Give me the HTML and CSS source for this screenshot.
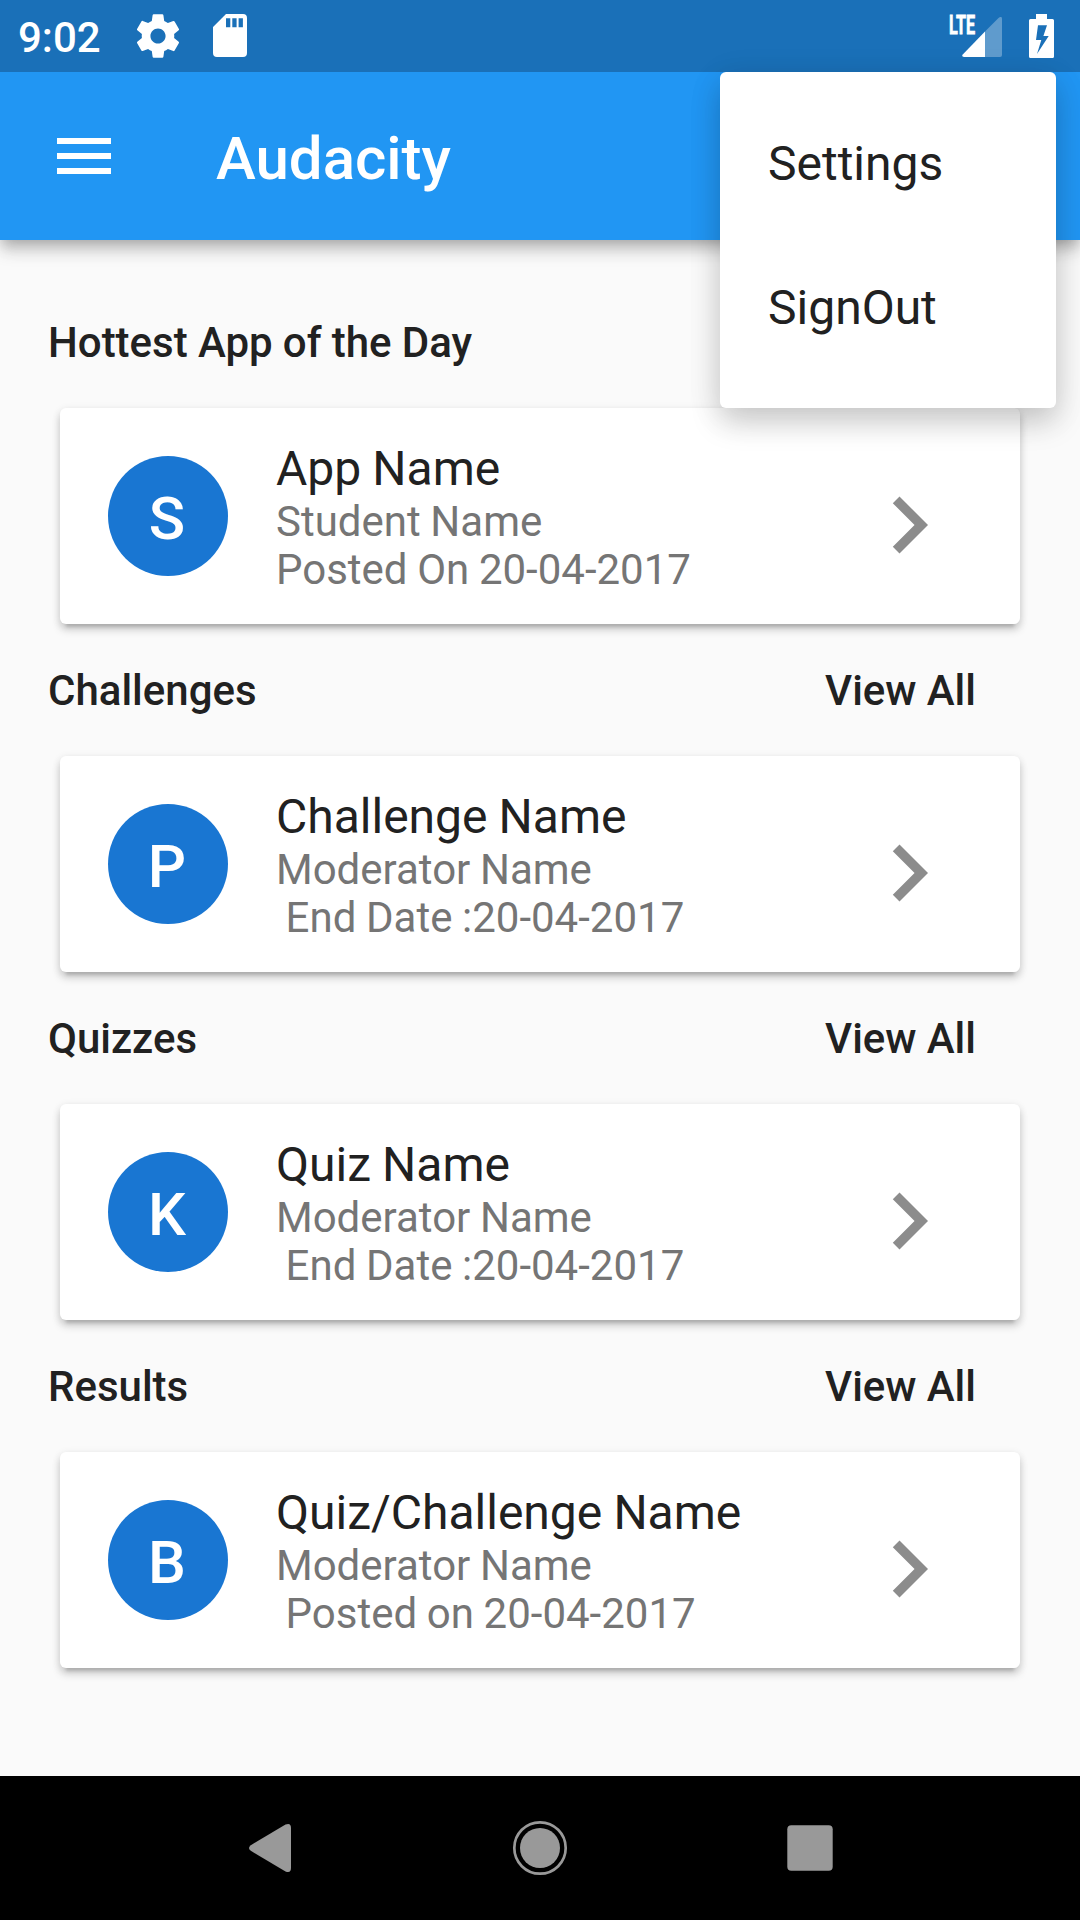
FILE: index.html
```html
<!DOCTYPE html>
<html lang="en">
<head>
<meta charset="utf-8">
<title>Audacity</title>
<link rel="stylesheet" href="styles.css">
</head>
<body>
<div class="screen">
  <header class="status-bar">
    <span class="clock">9:02</span>
    <svg class="gear" viewBox="0 0 24 24"><path d="M19.43 12.98c.04-.32.07-.64.07-.98s-.03-.66-.07-.98l2.11-1.65c.19-.15.24-.42.12-.64l-2-3.46c-.12-.22-.39-.3-.61-.22l-2.49 1c-.52-.4-1.08-.73-1.69-.98l-.38-2.65C14.46 2.18 14.25 2 14 2h-4c-.25 0-.46.18-.49.42l-.38 2.65c-.61.25-1.17.59-1.69.98l-2.49-1c-.23-.09-.49 0-.61.22l-2 3.46c-.13.22-.07.49.12.64l2.11 1.65c-.04.32-.07.65-.07.98s.03.66.07.98l-2.11 1.65c-.19.15-.24.42-.12.64l2 3.46c.12.22.39.3.61.22l2.49-1c.52.4 1.08.73 1.69.98l.38 2.65c.03.24.24.42.49.42h4c.25 0 .46-.18.49-.42l.38-2.65c.61-.25 1.17-.59 1.69-.98l2.49 1c.23.09.49 0 .61-.22l2-3.46c.12-.22.07-.49-.12-.64l-2.11-1.65zM12 15.5c-1.93 0-3.5-1.57-3.5-3.5s1.57-3.5 3.5-3.5 3.5 1.57 3.5 3.5-1.57 3.5-3.5 3.5z"/></svg>
    <svg class="sd" viewBox="0 0 34 43"><path fill-rule="evenodd" d="M13 0h17a4 4 0 0 1 4 4v35a4 4 0 0 1-4 4H4a4 4 0 0 1-4-4V13zM13 4.300v9h4.300v-9zM19.300 4.300v9h4.300v-9zM25.600 4.300v9h4.300v-9z"/></svg>
    <span class="lte">LTE</span>
    <svg class="signal" viewBox="0 0 40 40"><path opacity=".3" d="M23 14.500 36.500 1Q40-1.500 40 2v36q0 2-2 2H23z"/><path d="M1 37.300 23 14.500V40H2Q0 40 .2 38.300z"/></svg>
    <svg class="battery" viewBox="0 0 25 44"><path fill-rule="evenodd" d="M7 0h11v5h5.500Q25 5 25 6.500v36q0 1.500-1.500 1.500h-22Q0 44 0 42.500v-36Q0 5 1.500 5H7zM9 11.300 7 26h5.300L8 40 19.700 22h-5.300l3.600-10.700z"/></svg>
  </header>
  <div class="app-bar">
    <svg class="menu-icon" viewBox="0 0 24 24"><path d="M3 18h18v-2H3v2zm0-5h18v-2H3v2zm0-7v2h18V6H3z"/></svg>
    <h1 class="app-title">Audacity</h1>
  </div>
  <main class="content">
    <section>
      <div class="section-head"><h2>Hottest App of the Day</h2></div>
      <article class="card">
        <div class="avatar">S</div>
        <div class="info"><h3>App Name</h3><p>Student Name</p><p>Posted On 20-04-2017</p></div>
        <svg class="chevron" viewBox="0 0 24 24"><path d="M10 6 8.590 7.410 13.170 12l-4.580 4.590L10 18l6-6z"/></svg>
      </article>
    </section>
    <section>
      <div class="section-head"><h2>Challenges</h2><span>View All</span></div>
      <article class="card">
        <div class="avatar">P</div>
        <div class="info"><h3>Challenge Name</h3><p>Moderator Name</p><p> End Date :20-04-2017</p></div>
        <svg class="chevron" viewBox="0 0 24 24"><path d="M10 6 8.590 7.410 13.170 12l-4.580 4.590L10 18l6-6z"/></svg>
      </article>
    </section>
    <section>
      <div class="section-head"><h2>Quizzes</h2><span>View All</span></div>
      <article class="card">
        <div class="avatar">K</div>
        <div class="info"><h3>Quiz Name</h3><p>Moderator Name</p><p> End Date :20-04-2017</p></div>
        <svg class="chevron" viewBox="0 0 24 24"><path d="M10 6 8.590 7.410 13.170 12l-4.580 4.590L10 18l6-6z"/></svg>
      </article>
    </section>
    <section>
      <div class="section-head"><h2>Results</h2><span>View All</span></div>
      <article class="card">
        <div class="avatar">B</div>
        <div class="info"><h3>Quiz/Challenge Name</h3><p>Moderator Name</p><p> Posted on 20-04-2017</p></div>
        <svg class="chevron" viewBox="0 0 24 24"><path d="M10 6 8.590 7.410 13.170 12l-4.580 4.590L10 18l6-6z"/></svg>
      </article>
    </section>
  </main>
  <nav class="nav-bar">
    <svg viewBox="0 0 60 60"><path d="M10.800 27.200 45.500 6.600Q51 4.500 51 10v40q0 5.500-5.500 3.400L10.800 32.800Q7.200 30 10.800 27.200z"/></svg>
    <svg viewBox="0 0 60 60"><circle cx="30" cy="30" r="25.700" fill="none" stroke="#999" stroke-width="2.700"/><circle cx="30" cy="30" r="20"/></svg>
    <svg viewBox="0 0 60 60"><rect x="7.300" y="7.300" width="45.400" height="45.400" rx="4"/></svg>
  </nav>
  <div class="popup">
    <div class="popup-item">Settings</div>
    <div class="popup-item">SignOut</div>
  </div>
</div>
</body>
</html>
```
FILE: styles.css
```css
* { box-sizing: border-box; margin: 0; padding: 0; }
body { font-family: Roboto, sans-serif; color: #212121; }
svg { display: block; flex: none; }
.screen {
  position: relative;
  width: 1080px;
  height: 1920px;
  overflow: hidden;
  display: flex;
  flex-direction: column;
  background: #fafafa;
}
.status-bar {
  position: relative;
  z-index: 1;
  height: 72px;
  flex: none;
  display: flex;
  align-items: flex-start;
  padding-left: 18px;
  background: #1a70b8;
  color: #fff;
  fill: #fff;
}
.clock { width: 118px; font-size: 42px; font-weight: 500; line-height: 50px; padding-top: 13px; }
.gear { width: 52px; height: 52px; margin: 10px 29px 0 -4px; }
.sd { width: 34px; height: 43px; margin-top: 14px; }
.lte {
  margin: 12px 0 0 auto;
  width: 31px;
  font-size: 26px;
  line-height: 26px;
  font-weight: 700;
  -webkit-text-stroke: .8px #fff;
  transform: scaleX(.62);
  transform-origin: left;
}
.signal { width: 40px; height: 40px; margin: 17px 27px 0 -18px; }
.battery { width: 25px; height: 44px; margin: 14px 26px 0 0; }
.app-bar {
  position: relative;
  height: 168px;
  flex: none;
  display: flex;
  align-items: center;
  gap: 96px;
  padding-left: 48px;
  background: #2196f3;
  box-shadow: 0 6px 12px -3px rgba(0,0,0,.2), 0 12px 15px rgba(0,0,0,.14), 0 3px 24px rgba(0,0,0,.06);
}
.menu-icon { width: 72px; height: 72px; fill: #fff; }
.app-title { font-size: 60px; font-weight: 500; line-height: 72px; color: #fff; padding-top: 6px; }
.content {
  flex: 1;
  display: flex;
  flex-direction: column;
  gap: 42px;
  padding: 78px 60px 0 48px;
}
.section-head { display: flex; justify-content: space-between; height: 90px; padding-right: 44px; }
.section-head h2, .section-head span { font-size: 42px; font-weight: 500; line-height: 50px; word-spacing: -.2px; }
.card {
  display: flex;
  align-items: flex-start;
  height: 216px;
  margin-left: 12px;
  padding: 0 54px 0 48px;
  background: #fff;
  border-radius: 6px;
  box-shadow: 0 9px 3px -6px rgba(0,0,0,.13), 0 6px 8px rgba(0,0,0,.16), 0 2px 8px rgba(0,0,0,.1);
}
.avatar {
  width: 120px;
  height: 120px;
  flex: none;
  margin: 48px 48px 0 0;
  padding-right: 2px;
  border-radius: 50%;
  background: #1976d2;
  color: #fff;
  font-size: 60px;
  font-weight: 500;
  line-height: 126px;
  text-align: center;
}
.info { flex: 1; padding-top: 33px; white-space: pre; word-spacing: -.8px; }
.info h3 { font-size: 48px; font-weight: 400; line-height: 56px; margin-bottom: 1px; }
.info p { font-size: 42px; line-height: 48px; color: #757575; }
.chevron { width: 114px; height: 114px; margin-top: 60px; fill: #8c8c8c; }
.nav-bar {
  height: 144px;
  flex: none;
  display: flex;
  justify-content: center;
  align-items: center;
  gap: 210px;
  background: #000;
  fill: #999;
}
.nav-bar svg { width: 60px; height: 60px; }
.popup {
  position: absolute;
  z-index: 2;
  left: 720px;
  top: 72px;
  width: 336px;
  height: 336px;
  padding: 24px 48px;
  background: #fff;
  border-radius: 6px;
  box-shadow: 0 14px 30px rgba(0,0,0,.18), 0 6px 36px rgba(0,0,0,.08);
}
.popup-item { height: 144px; font-size: 48px; line-height: 136px; }
```
